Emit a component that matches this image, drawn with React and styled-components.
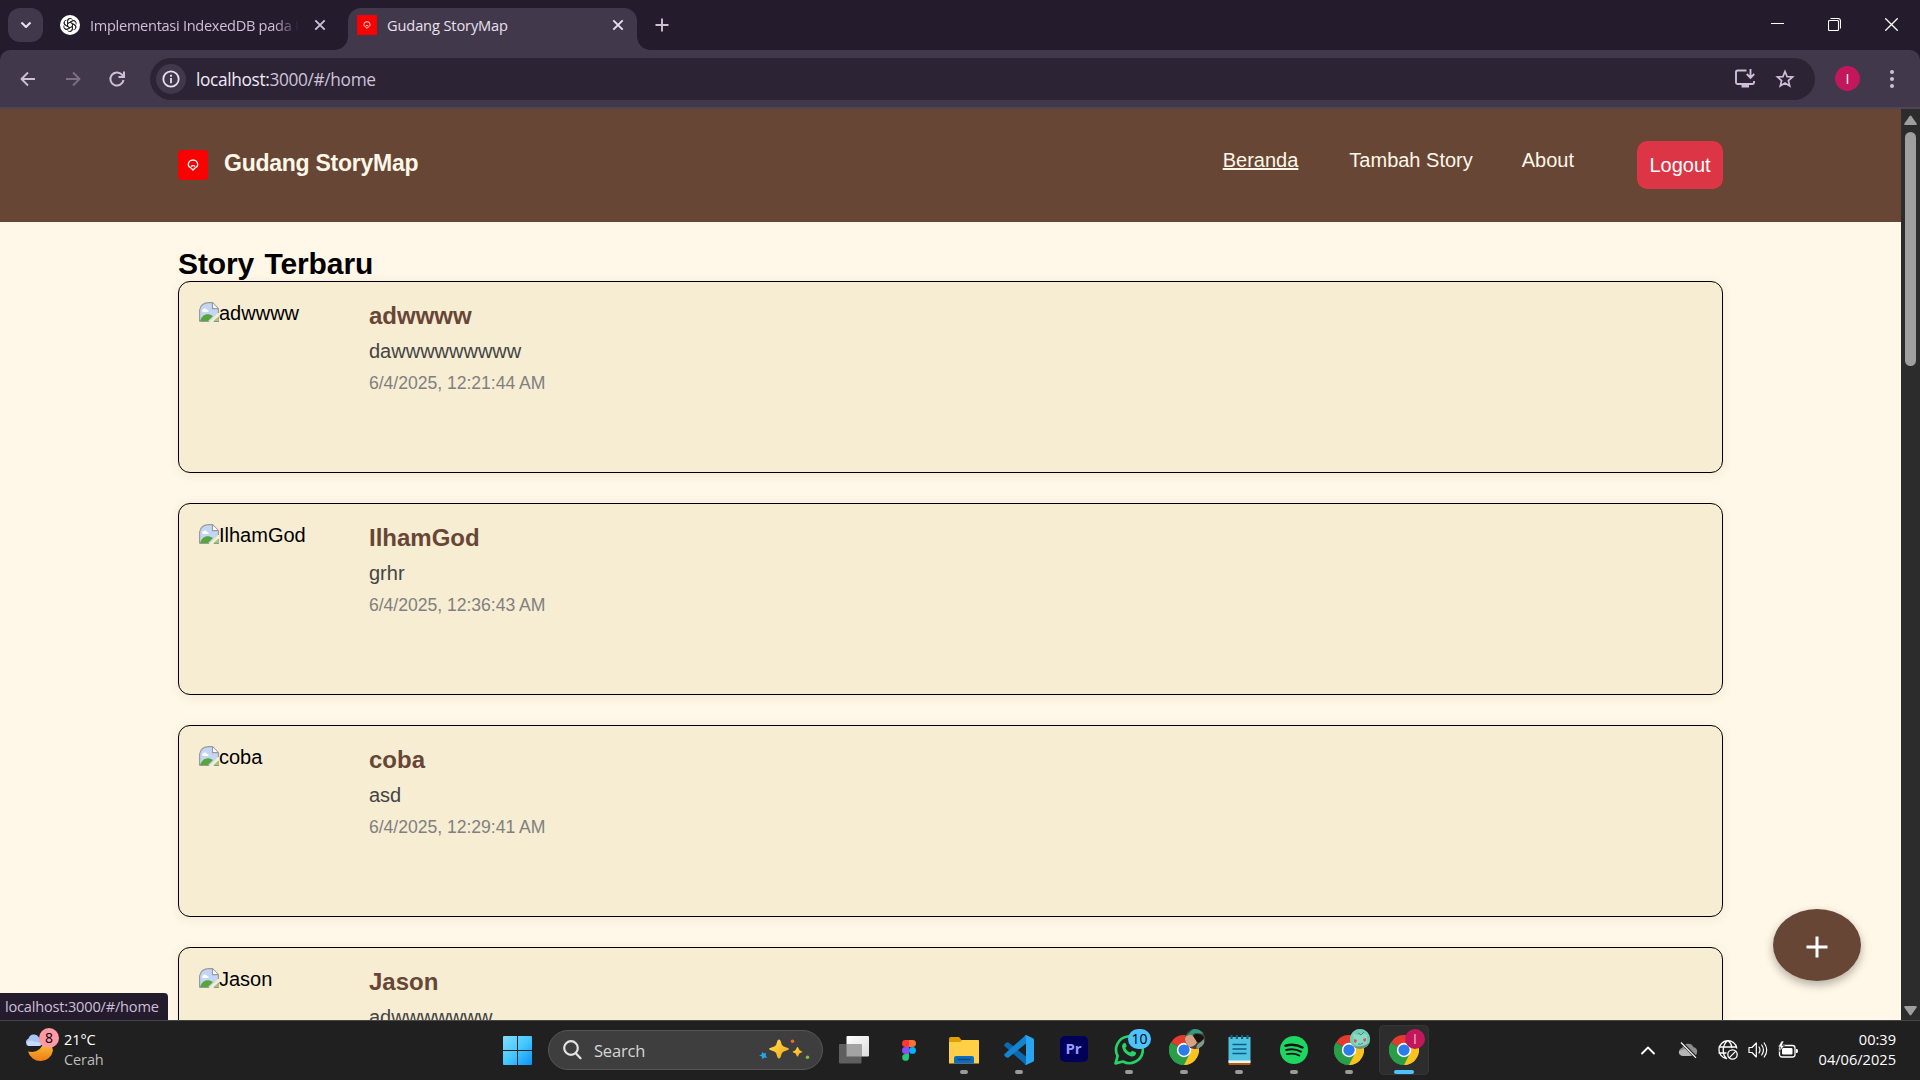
import React from "react";
import styled, { createGlobalStyle } from "styled-components";

const Global = createGlobalStyle`
  * { box-sizing: border-box; margin: 0; padding: 0; }
  html, body { background: #241b2d; overflow: hidden; }
  svg { display: block; flex: none; }
`;

const UI = `"Open Sans", "Noto Sans", sans-serif`;
const ARIAL = `"Liberation Sans", Arial, sans-serif`;

const Screen = styled.div`
  width: 1920px;
  height: 1080px;
  display: flex;
  flex-direction: column;
  overflow: hidden;
  font-family: ${UI};
`;

/* browser tab strip */
const TabStrip = styled.div`
  height: 50px;
  flex: none;
  display: flex;
  align-items: flex-end;
  background: #241b2d;
  padding-left: 8px;
`;
const TabSearch = styled.button`
  width: 35px;
  height: 34px;
  margin-bottom: 8px;
  border: 0;
  border-radius: 12px;
  background: #42384b;
  display: grid;
  place-items: center;
`;
const Tab = styled.div`
  position: relative;
  height: 42px;
  width: ${(p) => p.$w}px;
  margin-left: ${(p) => p.$ml}px;
  padding: 0 ${(p) => p.$pr}px 8px 9px;
  display: flex;
  align-items: center;
  gap: 10px;
  border-radius: 13px 13px 0 0;
  background: ${(p) => (p.$active ? "#42384b" : "transparent")};
  color: ${(p) => (p.$active ? "#e9e0ee" : "#cdbfd8")};
  &::before, &::after {
    content: "";
    display: ${(p) => (p.$active ? "block" : "none")};
    position: absolute;
    bottom: 0;
    width: 13px;
    height: 13px;
  }
  &::before { left: -13px; background: radial-gradient(circle at 0 0, transparent 12.5px, #42384b 13px); }
  &::after { right: -13px; background: radial-gradient(circle at 100% 0, transparent 12.5px, #42384b 13px); }
`;
const TabTitle = styled.span`
  flex: 1;
  min-width: 0;
  overflow: hidden;
  white-space: nowrap;
  font-size: 14.6px;
  line-height: 20px;
  letter-spacing: ${(p) => p.$ls}px;
  ${(p) => p.$fade && "margin-right: 5px; mask-image: linear-gradient(90deg, #000 88%, transparent 100%);"}
`;
const NewTab = styled.div`
  margin: 0 0 18px 18px;
`;
const WindowButtons = styled.div`
  margin-left: auto;
  height: 50px;
  display: flex;
  align-items: center;
  gap: 44px;
  padding: 0 22px 1px 0;
`;

/* toolbar */
const ToolbarBack = styled.div`
  height: 59px;
  flex: none;
  background: #241b2d;
`;
const Toolbar = styled.div`
  height: 59px;
  display: flex;
  align-items: center;
  background: #42384b;
  border-bottom: 2px solid #4e4657;
  border-radius: 10px 10px 0 0;
  padding: 0 20px 0 18px;
`;
const NavIcons = styled.div`
  display: flex;
  gap: 24.5px;
  width: 132px;
`;
const Omnibox = styled.div`
  width: 1665px;
  height: 42px;
  border-radius: 21px;
  background: #2c2335;
  display: flex;
  align-items: center;
  padding: 0 20px 0 6px;
`;
const SiteInfo = styled.div`
  width: 30px;
  height: 30px;
  border-radius: 50%;
  background: #42384b;
  display: grid;
  place-items: center;
`;
const Url = styled.div`
  margin-left: 10px;
  padding-top: 2px;
  flex: 1;
  font-size: 17.3px;
  line-height: 24px;
  letter-spacing: -0.35px;
  color: #cfc3d8;
  b { font-weight: 400; color: #f1e9f6; }
`;
const OmniIcons = styled.div`
  display: flex;
  align-items: center;
  gap: 20px;
`;
const Profile = styled.div`
  width: 25px;
  height: 25px;
  margin-left: 20px;
  border-radius: 50%;
  background: #c2185b;
  color: #fff;
  font-size: 14px;
  line-height: 25px;
  text-align: center;
`;
const MenuDots = styled.div`
  margin-left: auto;
  width: 16px;
  display: flex;
  flex-direction: column;
  align-items: center;
  gap: 3px;
  i { width: 4px; height: 4px; border-radius: 50%; background: #cdbfd8; }
`;

/* web page */
const Viewport = styled.div`
  height: 911px;
  flex: none;
  display: flex;
  position: relative;
  overflow: hidden;
  font-family: ${ARIAL};
`;
const Page = styled.main`
  width: 1901px;
  background: #fff7e7;
`;
const SiteHeader = styled.header`
  height: 113px;
  background: #674636;
  display: flex;
  align-items: center;
  padding: 0 178px 2px;
`;
const Brand = styled.div`
  display: flex;
  align-items: center;
  gap: 16px;
  color: #fff7e7;
  font-size: 23px;
  font-weight: 700;
  line-height: 30px;
  letter-spacing: -0.25px;
`;
const BrandText = styled.span`
  padding-bottom: 3px;
`;
const Logo = styled.div`
  width: 30px;
  height: 30px;
  border-radius: 4px;
  background: #fb0000;
  display: grid;
  place-items: center;
`;
const Nav = styled.nav`
  margin-left: auto;
  display: flex;
  align-items: flex-start;
  padding-top: 1px;
`;
const NavLink = styled.a`
  margin-top: 8px;
  margin-right: ${(p) => p.$mr}px;
  font-size: 20px;
  line-height: 23px;
  color: #fff7e7;
  text-decoration: ${(p) => (p.$active ? "underline" : "none")};
`;
const Logout = styled.button`
  width: 86px;
  height: 48px;
  border: 0;
  border-radius: 10px;
  background: #dc3545;
  color: #fff;
  font: 20px/23px ${ARIAL};
`;
const Content = styled.section`
  padding: 24px 178px 0;
`;
const Heading = styled.h1`
  font-size: 30px;
  line-height: 35px;
  letter-spacing: -0.1px;
  word-spacing: 2px;
  color: #000;
`;
const Stories = styled.div`
  display: flex;
  flex-direction: column;
  gap: 30px;
`;
const Card = styled.article`
  height: 192px;
  display: flex;
  gap: 20px;
  padding: 20px;
  border: 1px solid #000;
  border-radius: 12px;
  background: #f7edd3;
  box-shadow: 0 2px 12px rgba(103, 70, 54, 0.08);
`;
const Photo = styled.div`
  width: 150px;
  height: 150px;
  display: flex;
  align-items: flex-start;
  font-size: 20px;
  line-height: 23px;
  color: #000;
`;
const Details = styled.div`
  padding-top: 0;
`;
const Name = styled.h2`
  font-size: 24px;
  line-height: 27px;
  color: #674636;
`;
const Description = styled.p`
  margin-top: 11px;
  font-size: 20px;
  line-height: 23px;
  color: #444;
`;
const CreatedAt = styled.p`
  margin-top: 10px;
  font-size: 17.6px;
  line-height: 20px;
  letter-spacing: -0.03px;
  color: #808080;
`;
const Fab = styled.button`
  position: absolute;
  left: 1773px;
  top: 800px;
  width: 88px;
  height: 72px;
  border: 0;
  border-radius: 50%;
  background: #674636;
  display: grid;
  place-items: center;
  padding-top: 3px;
  box-shadow: 0 4px 10px rgba(0, 0, 0, 0.3);
`;
const Scrollbar = styled.div`
  width: 19px;
  background: #2c2c2c;
  display: flex;
  flex-direction: column;
  align-items: center;
  padding: 6px 0 4px;
`;
const Thumb = styled.div`
  width: 11px;
  height: 234px;
  margin: 7px 0 auto;
  border-radius: 6px;
  background: #9f9f9f;
`;
const StatusBubble = styled.div`
  position: absolute;
  left: 0;
  bottom: 0;
  width: 168px;
  height: 27px;
  padding-left: 5px;
  border-radius: 0 4px 0 0;
  background: #241b2d;
  color: #cdbfd8;
  font: 14.6px/27px ${UI};
  letter-spacing: -0.2px;
`;

/* taskbar */
const Taskbar = styled.footer`
  height: 60px;
  flex: none;
  display: flex;
  align-items: center;
  background: #202020;
  border-top: 1px solid #464646;
  padding-bottom: 1px;
  color: #fff;
`;
const Weather = styled.div`
  width: 492px;
  padding-left: 24px;
  display: flex;
  align-items: center;
  gap: 4px;
  font-size: 14.5px;
  line-height: 20px;
`;
const WeatherText = styled.div`
  padding-bottom: 1px;
  letter-spacing: -0.1px;
`;
const Muted = styled.div`
  color: #bdbdbd;
`;
const SearchBox = styled.div`
  width: 275px;
  height: 40px;
  margin: 0 6px;
  padding: 0 11px 0 14px;
  border: 1px solid #565656;
  border-radius: 20px;
  background: #3e3e3e;
  display: flex;
  align-items: center;
  color: #d6d6d6;
  font-size: 16.5px;
  span { flex: 1; margin-left: 12px; letter-spacing: -0.2px; }
`;
const Apps = styled.div`
  display: flex;
  gap: 5px;
`;
const App_ = styled.div`
  position: relative;
  width: 50px;
  height: 50px;
  display: grid;
  place-items: center;
  border-radius: 5px;
  background: ${(p) => (p.$active ? "#2d2d2d" : "transparent")};
  box-shadow: ${(p) => (p.$active ? "inset 0 0 0 1px #353535" : "none")};
  &::after {
    content: "";
    display: ${(p) => (p.$open || p.$active ? "block" : "none")};
    position: absolute;
    bottom: 1px;
    left: 50%;
    transform: translateX(-50%);
    width: ${(p) => (p.$active ? 20 : 8)}px;
    height: 4px;
    border-radius: 2px;
    background: ${(p) => (p.$active ? "#4cc2ff" : "#9a9a9a")};
  }
`;
const Badge = styled.div`
  position: absolute;
  left: ${(p) => p.$x}px;
  top: ${(p) => p.$y}px;
  width: ${(p) => p.$w || 20}px;
  height: 20px;
  border-radius: 10px;
  overflow: hidden;
  background: ${(p) => p.$bg};
  color: ${(p) => p.$fg || "#000"};
  font-size: 14px;
  line-height: 20px;
  text-align: center;
`;
const PrTile = styled.div`
  width: 28px;
  height: 26px;
  border-radius: 5px;
  background: #00005b;
  color: #9999ff;
  font: 700 15px/25px "Open Sans", sans-serif;
  text-align: center;
  margin: -2px 0 0 -1px;
`;
const Tray = styled.div`
  margin-left: auto;
  display: flex;
  align-items: center;
  padding-right: 24px;
`;
const TrayIcon = styled.div`
  margin-right: ${(p) => p.$mr}px;
`;
const Clock = styled.div`
  width: 78px;
  padding-bottom: 2px;
  text-align: right;
  font-size: 14.6px;
  line-height: 20px;
  white-space: nowrap;
`;

const line = { fill: "none", stroke: "currentColor", strokeLinecap: "round", strokeLinejoin: "round" };

const CloseX = ({ c }) => (
  <svg width="12" height="12" viewBox="0 0 12 12" {...line} stroke={c} strokeWidth="1.9" strokeLinecap="butt">
    <path d="M1.3 1.3l9.4 9.4M10.7 1.3l-9.4 9.4" />
  </svg>
);

const KnotIcon = () => (
  <svg width="20" height="20" viewBox="0 0 20 20">
    <circle cx="10" cy="10" r="10" fill="#fff" />
    <g fill="none" stroke="#222" strokeWidth="0.9">
      {[0, 60, 120, 180, 240, 300].map((a) => (
        <path key={a} transform={`rotate(${a} 10 10)`} d="M7.6 11.4V6.2a2.7 2.7 0 0 1 4.9-1.6M7.6 8.6l4.5-2.6a2.7 2.7 0 0 1 3.6 .9" />
      ))}
    </g>
  </svg>
);

const Pin = ({ size }) => (
  <svg width={size} height={size} viewBox="0 0 12 12" fill="none" stroke="#fff" strokeWidth="1.3">
    <path d="M6 11L4 9C2.200 8.200 1.300 7 1.300 5.500a4.700 4.500 0 0 1 9.400 0C10.700 7 9.800 8.200 8 9z" />
    <path d="M3.800 7.600Q6 5.800 8.200 7.600" />
  </svg>
);
const Favicon = styled(Logo)`
  width: 20px;
  height: 20px;
  border-radius: 0;
`;

const BrokenImage = () => (
  <svg width="20" height="20" viewBox="0 0 20 20">
    <path d="M1 20V7Q3 1 10 1h3l6 6v4L10 20z" fill="#c4d6f6" />
    <path d="M3 9c1-3 4-3 5-1 2 0 2 2 1 2H4z" fill="#fff" />
    <path d="M1 19c2-6 7-9 13-5l-5 5z" fill="#57a639" />
    <path d="M.6 19.500V8Q2 .7 10 .7h3.500l5.900 6V11M20 15v4.500h-5M.6 19.500H10" fill="none" stroke="#9a9a9a" strokeWidth="1.200" />
    <path d="M13.500 1v5.700H19" fill="#fff" stroke="#9a9a9a" strokeWidth="1.200" />
    <path d="M14 19.500l5.500-5v5z" fill="#57a639" opacity=".55" />
  </svg>
);

const Chrome = () => (
  <svg width="30" height="30" viewBox="0 0 48 48">
    <path d="M24 24L3.200 12A24 24 0 0 1 44.800 12z" fill="#e33b2e" />
    <path d="M24 24L44.800 12A24 24 0 0 1 24 48z" fill="#fcc31e" />
    <path d="M24 24L24 48A24 24 0 0 1 3.200 12z" fill="#2a9d49" />
    <path d="M24 13h20.800A24 24 0 0 1 24 48l9.500-18.500z" fill="#fcc31e" />
    <path d="M3.200 12L14.500 29.500 24 35l9.500-5.500L24 48A24 24 0 0 1 3.200 12z" fill="#2a9d49" />
    <circle cx="24" cy="24" r="11.500" fill="#fff" />
    <circle cx="24" cy="24" r="9" fill="#2b7bea" />
  </svg>
);

const PhotoBadge = () => (
  <svg width="20" height="20" viewBox="0 0 20 20">
    <rect width="20" height="20" fill="#4a4038" />
    <path d="M0 8L8 0h12v5L10 4 3 9z" fill="#2f9c86" />
    <path d="M0 8q6-4 10 0l2 5q-2 5-8 5L0 13z" fill="#d8a183" />
    <path d="M8 7q5-5 11 1l-2 6-5-1z" fill="#17130f" />
    <path d="M12 16l7-6v8l-8 2z" fill="#7d9a8b" />
  </svg>
);
const CreatureBadge = () => (
  <svg width="20" height="20" viewBox="0 0 20 20">
    <rect width="20" height="20" fill="#73cdb4" />
    <path d="M0 20v-4q9 4 20-2v6z" fill="#7b8b7d" />
    <path d="M3 4l4 2 5-2 5 2v8q-7 6-13 0z" fill="#8adbc5" />
    <path d="M4 10l3 1-1 3-2-1zM13 10l3-1v3l-2 1z" fill="#d9526a" />
    <path d="M8 4l3 2 3-3M8 15q3 1 5-1" stroke="#3c8c7a" fill="none" />
  </svg>
);

const Windows = () => (
  <svg width="29" height="29" viewBox="0 0 29 29">
    <defs>
      <linearGradient id="win" gradientUnits="userSpaceOnUse" x1="0" y1="0" x2="29" y2="29">
        <stop offset="0" stopColor="#85dcff" />
        <stop offset=".5" stopColor="#44c8fd" />
        <stop offset="1" stopColor="#0a93fb" />
      </linearGradient>
    </defs>
    <path fill="url(#win)" d="M1 0h13v14H0V1a1 1 0 0 1 1-1zM15 0h13a1 1 0 0 1 1 1v13H15zM0 15h14v14H1a1 1 0 0 1-1-1zM15 15h14v13a1 1 0 0 1-1 1H15z" />
  </svg>
);

const Sparkles = () => (
  <svg width="52" height="22" viewBox="0 0 52 22">
    <defs>
      <linearGradient id="gold" x1="0" y1="0" x2="1" y2="1">
        <stop offset="0" stopColor="#ffe14d" />
        <stop offset="1" stopColor="#f5a713" />
      </linearGradient>
    </defs>
    <path fill="url(#gold)" d="M20 .5q1.300 0 1.900 2.300l1 3.300 1.800 1.500 3.500 1.200q1.800.6 1.800 1.200t-1.800 1.200l-3.500 1.200-1.800 1.500-1 3.300Q21.300 19.500 20 19.500t-1.900-2.300l-1-3.300-1.800-1.500-3.500-1.200Q10 10.600 10 10t1.800-1.200l3.500-1.200 1.800-1.500 1-3.300Q18.700.5 20 .5z" />
    <path fill="url(#gold)" d="M38.500 8q.8 0 1.100 1.500l.8 1.600 1.500.8q1.500.3 1.500.9t-1.500.9l-1.500.8-.8 1.600q-.3 1.500-1.100 1.500t-1.100-1.500l-.8-1.600-1.500-.8q-1.500-.3-1.500-.9t1.500-.9l1.500-.8.8-1.600Q37.700 8 38.500 8z" />
    <path fill="#20a8f0" d="M3 13l2 1.500 2-.5-.2 2.500L8 19l-2.500-.5L3 20v-2.500L0 16.500l2.700-1z" />
    <circle cx="33.500" cy="2.300" r="1.800" fill="#ee6a2b" />
    <circle cx="48.500" cy="18.300" r="1.800" fill="#7cc142" />
  </svg>
);

const TaskView = () => (
  <svg width="30" height="28" viewBox="0 0 30 28">
    <defs>
      <linearGradient id="tv" x1="0" y1="0" x2="1" y2="1">
        <stop offset="0" stopColor="#fff" />
        <stop offset="1" stopColor="#dcdcdc" />
      </linearGradient>
    </defs>
    <rect x="7.500" width="22.500" height="20.500" rx="1" fill="url(#tv)" />
    <rect y="8" width="22.500" height="19.500" rx="1" fill="#5f5f5f" />
    <path d="M7.500 8h15v12.500h-15z" fill="#a3a3a3" />
  </svg>
);

const Figma = () => (
  <svg width="14" height="21" viewBox="0 0 14 21">
    <path d="M7 0H3.500a3.400 3.400 0 0 0 0 6.900H7z" fill="#ff3737" />
    <path d="M7 0h3.500a3.400 3.400 0 0 1 0 6.900H7z" fill="#ff7237" />
    <path d="M7 7H3.500a3.400 3.400 0 0 0 0 6.900H7z" fill="#874fff" />
    <circle cx="10.500" cy="10.400" r="3.400" fill="#00b6ff" />
    <path d="M7 14H3.500A3.400 3.400 0 1 0 7 17.400z" fill="#24cb71" />
  </svg>
);

const Folder = () => (
  <svg width="30" height="27" viewBox="0 0 30 27">
    <path d="M0 2q0-2 1.500-2H10l2.500 3H28q2 0 2 2v3H0z" fill="#dfa000" />
    <path d="M0 5h11l2.500-2H29q1 0 1 1v22.500H0z" fill="#ffcf48" />
    <path d="M5 26.500V21q0-2 2-2h16q2 0 2 2v5.500z" fill="#0f6cbd" />
    <path d="M8.500 22.500h13" stroke="#0a4a85" strokeWidth="1.500" />
  </svg>
);

const VSCode = () => (
  <svg width="30" height="30" viewBox="0 0 30 30">
    <path d="M1 8.800l2-1.500q.6-.3 1.200 0L22 21.500V30L.5 11q-.8-1 .5-2.200z" fill="#0a6ab6" />
    <path d="M1 21.200l2 1.500q.6.300 1.200 0L22 8.500V0L.5 19q-.8 1 .5 2.200z" fill="#1584d0" />
    <path d="M22 0l7 3.200q1 .5 1 1.600v20.400q0 1.100-1 1.600L22 30q-1 0-1.800-.8 1.800 1 1.800-1.700v-25Q22-.2 20.200.8 21 0 22 0z" fill="#27a5f2" />
  </svg>
);

const WhatsApp = () => (
  <svg width="30" height="30" viewBox="0 0 30 30">
    <path d="M1.600 28.400l2-7.400A13.400 13.400 0 1 1 9 26.500z" fill="none" stroke="#25d366" strokeWidth="2.700" strokeLinejoin="round" />
    <path d="M10.200 8q-2.800 1.500-2 4.500 1.600 6.500 9 9 3 .6 4.800-2.500.5-1.300-.7-1.900l-2.600-1.200q-.8-.3-1.400.5l-1 1.200q-3.500-1-5-4.600l1-1.300q.5-.6.200-1.400l-1-2.100q-.5-.6-1.300-.2z" fill="#25d366" />
  </svg>
);

const Notepad = () => (
  <svg width="23" height="30" viewBox="0 0 23 30">
    <rect x=".5" y="2" width="22" height="25" fill="#50c3e0" />
    <path d="M.5 25.500h22v2.500H.5z" fill="#f3f3f3" />
    <path d="M.5 28h22v1.200q0 .8-1 .8h-20q-1 0-1-.8z" fill="#b8590c" />
    <path d="M4.500 9.500h14M4.500 14h14M4.500 18.500h14" stroke="#0d5b87" strokeWidth="1.500" />
    <path d="M3.500 0v4M8.800 0v4M14.100 0v4M19.400 0v4" stroke="#16607d" strokeWidth="2.200" />
  </svg>
);

const Spotify = () => (
  <svg width="28" height="28" viewBox="0 0 28 28">
    <circle cx="14" cy="14" r="14" fill="#1ed760" />
    <g {...line} stroke="#151515">
      <path d="M5.500 9.700q9-2.600 17 1.800" strokeWidth="2.500" />
      <path d="M6.200 14q8-2.200 14.700 1.600" strokeWidth="2.100" />
      <path d="M7 18.200q7-1.700 12.300 1.300" strokeWidth="1.800" />
    </g>
  </svg>
);

const MoonCloud = () => (
  <svg width="36" height="40" viewBox="0 0 36 40">
    <defs>
      <linearGradient id="moon" x1="0" y1="0" x2="0" y2="1">
        <stop offset="0" stopColor="#f9c23c" />
        <stop offset="1" stopColor="#f07d14" />
      </linearGradient>
    </defs>
    <path d="M4 21.500q12.500 2.500 15.500-9.500 9 1 9.500 8.500a12.800 12.800 0 0 1-25 1z" fill="url(#moon)" />
    <path d="M4.500 16a4 4 0 0 1 0-7.500Q6 4 10.500 4.500q4 .5 5 4.500 3 .5 3 3.500T15 16z" fill="#a9c5f4" />
    <path d="M3 12q4-3 8 0 4-1 6 3l-2 1H5q-2 0-2-4z" fill="#c9dbfa" />
  </svg>
);
const WeatherIcon = styled.div`
  position: relative;
  width: 36px;
  height: 40px;
`;

const stories = [
  { name: "adwwww", text: "dawwwwwwwww", date: "6/4/2025, 12:21:44 AM" },
  { name: "IlhamGod", text: "grhr", date: "6/4/2025, 12:36:43 AM" },
  { name: "coba", text: "asd", date: "6/4/2025, 12:29:41 AM" },
  { name: "Jason", text: "adwwwwwww", date: "" },
];

export default function App() {
  return (
    <Screen>
      <Global />
      <TabStrip>
        <TabSearch>
          <svg width="12" height="8" viewBox="0 0 12 8" {...line} stroke="#e9e0ee" strokeWidth="2.100" strokeLinecap="butt"><path d="M1.500 1.500L6 6l4.500-4.500" /></svg>
        </TabSearch>
        <Tab $w={283} $ml={8} $pr={8}>
          <KnotIcon />
          <TabTitle $ls={-0.3} $fade>Implementasi IndexedDB pada PWA</TabTitle>
          <CloseX c="#cdbfd8" />
        </Tab>
        <Tab $active $w={289} $ml={14} $pr={13}>
          <Favicon><Pin size={8} /></Favicon>
          <TabTitle $ls={-0.12}>Gudang StoryMap</TabTitle>
          <CloseX c="#e9e0ee" />
        </Tab>
        <NewTab>
          <svg width="14" height="14" viewBox="0 0 14 14" {...line} stroke="#cdbfd8" strokeWidth="1.900" strokeLinecap="butt"><path d="M7 .5v13M.5 7h13" /></svg>
        </NewTab>
        <WindowButtons>
          <svg width="13" height="13" viewBox="0 0 13 13"><path d="M0 5.500h13" stroke="#fff" /></svg>
          <svg width="13" height="13" viewBox="0 0 13 13" fill="none" stroke="#fff" strokeWidth="1.100"><rect x=".5" y="2.500" width="10" height="10" rx="1" /><path d="M2.500.5H10A2.500 2.500 0 0 1 12.500 3v7.500" /></svg>
          <svg width="13" height="13" viewBox="0 0 13 13" stroke="#fff" strokeWidth="1.300"><path d="M.3.300l12.400 12.400M12.700.3L.3 12.700" /></svg>
        </WindowButtons>
      </TabStrip>

      <ToolbarBack>
        <Toolbar>
          <NavIcons>
            <svg width="20" height="20" viewBox="0 0 20 20" {...line} stroke="#cdbfd8" strokeWidth="1.900" strokeLinecap="butt"><path d="M17 10H4M10 3.500L3.500 10l6.500 6.500" /></svg>
            <svg width="20" height="20" viewBox="0 0 20 20" {...line} stroke="#7b6f86" strokeWidth="1.900" strokeLinecap="butt"><path d="M3 10h13M10 3.500l6.500 6.500-6.500 6.500" /></svg>
            <svg width="20" height="20" viewBox="0 0 20 20" {...line} stroke="#cdbfd8" strokeWidth="2" strokeLinecap="butt"><path d="M16.500 11A6.600 6.600 0 1 1 15 5.700L17 8M17 2.500V8h-5.500" strokeLinejoin="miter" /></svg>
          </NavIcons>
          <Omnibox>
            <SiteInfo>
              <svg width="18" height="18" viewBox="0 0 18 18" fill="none" stroke="#e9e0ee" strokeWidth="1.800"><circle cx="9" cy="9" r="7.700" /><path d="M9 8v5.200M9 4.800v1.900" /></svg>
            </SiteInfo>
            <Url><b>localhost:</b>3000/#/home</Url>
            <OmniIcons>
              <svg width="20" height="19" viewBox="0 0 20 19" fill="none" stroke="#cdbfd8" strokeWidth="1.900"><path d="M11.500 1.500H3Q1 1.500 1 3v10.500Q1 15 2.500 15h15q1.500 0 1.500-1.500V12M15.500 0v8.500M11.800 5l3.700 3.800L19.200 5" /><path d="M6.500 17h7.500" strokeWidth="3" /></svg>
              <svg width="20" height="20" viewBox="0 0 20 20" fill="none" stroke="#cdbfd8" strokeWidth="1.700"><path d="M10 2.500l2.100 5.100 5.500.4-4.200 3.600 1.300 5.400-4.700-2.900L5.300 17l1.300-5.400L2.400 8l5.500-.4z" /></svg>
            </OmniIcons>
          </Omnibox>
          <Profile>I</Profile>
          <MenuDots><i /><i /><i /></MenuDots>
        </Toolbar>
      </ToolbarBack>

      <Viewport>
        <Page>
          <SiteHeader>
            <Brand>
              <Logo><Pin size={12} /></Logo>
              <BrandText>Gudang StoryMap</BrandText>
            </Brand>
            <Nav>
              <NavLink $active $mr={51}>Beranda</NavLink>
              <NavLink $mr={49}>Tambah Story</NavLink>
              <NavLink $mr={63}>About</NavLink>
              <Logout>Logout</Logout>
            </Nav>
          </SiteHeader>
          <Content>
            <Heading>Story Terbaru</Heading>
            <Stories>
              {stories.map((s) => (
                <Card key={s.name}>
                  <Photo><BrokenImage />{s.name}</Photo>
                  <Details>
                    <Name>{s.name}</Name>
                    <Description>{s.text}</Description>
                    <CreatedAt>{s.date}</CreatedAt>
                  </Details>
                </Card>
              ))}
            </Stories>
          </Content>
        </Page>
        <Scrollbar>
          <svg width="13" height="10" viewBox="0 0 13 10"><path d="M6.500.500Q7 .5 7.500 1.200L12.600 8.500q.5 1.500-1 1.500H1.400Q-.1 10 .4 8.500L5.500 1.200Q6 .5 6.500.5z" fill="#9f9f9f" /></svg>
          <Thumb />
          <svg width="13" height="10" viewBox="0 0 13 10"><path d="M6.500 9.500Q7 9.500 7.500 8.800L12.600 1.500q.5-1.500-1-1.500H1.400Q-.1 0 .4 1.500L5.500 8.800Q6 9.500 6.500 9.500z" fill="#9f9f9f" /></svg>
        </Scrollbar>
        <Fab>
          <svg width="22" height="22" viewBox="0 0 22 22"><path d="M11 .5v21M.5 11h21" stroke="#fff" strokeWidth="3" /></svg>
        </Fab>
        <StatusBubble>localhost:3000/#/home</StatusBubble>
      </Viewport>

      <Taskbar>
        <Weather>
          <WeatherIcon>
            <MoonCloud />
            <Badge $x={15} $y={-2} $bg="#ff99a4">8</Badge>
          </WeatherIcon>
          <WeatherText>
            <div>21°C</div>
            <Muted>Cerah</Muted>
          </WeatherText>
        </Weather>
        <App_><Windows /></App_>
        <SearchBox>
          <svg width="19" height="20" viewBox="0 0 19 20" {...line} stroke="#e3e3e3" strokeWidth="2.200"><circle cx="8" cy="8" r="6.800" /><path d="M12.800 13.300l4.700 5" /></svg>
          <span>Search</span>
          <Sparkles />
        </SearchBox>
        <Apps>
          <App_><TaskView /></App_>
          <App_><Figma /></App_>
          <App_ $open><Folder /></App_>
          <App_ $open><VSCode /></App_>
          <App_><PrTile>Pr</PrTile></App_>
          <App_ $open><WhatsApp /><Badge $x={24} $y={4} $w={23} $bg="#4cc2ff">10</Badge></App_>
          <App_ $open><Chrome /><Badge $x={26} $y={4} $bg="#555"><PhotoBadge /></Badge></App_>
          <App_ $open><Notepad /></App_>
          <App_ $open><Spotify /></App_>
          <App_ $open><Chrome /><Badge $x={26} $y={4} $bg="#73cdb4"><CreatureBadge /></Badge></App_>
          <App_ $active><Chrome /><Badge $x={26} $y={4} $bg="#c2185b" $fg="#f3b5cc">I</Badge></App_>
        </Apps>
        <Tray>
          <TrayIcon $mr={23}>
            <svg width="14" height="9" viewBox="0 0 14 9" {...line} stroke="#fff" strokeWidth="1.800"><path d="M1 7.500l6-6 6 6" /></svg>
          </TrayIcon>
          <TrayIcon $mr={20}>
            <svg width="20" height="16" viewBox="0 0 20 16"><path d="M4.500 14a4.300 4.300 0 0 1-.3-8.300 6.300 6.300 0 0 1 11.500-.5A4.500 4.500 0 0 1 15.500 14z" fill="#8d8d8d" /><path d="M5 14q-5-1-4-5l6-2 8 3-3 4z" fill="#b5b5b5" /><path d="M3.500.5L18 15.500" stroke="#202020" strokeWidth="3" /><path d="M3 .5L18 15.800" stroke="#fff" strokeWidth="1.200" /></svg>
          </TrayIcon>
          <TrayIcon $mr={10}>
            <svg width="20" height="20" viewBox="0 0 20 20" {...line} stroke="#fff" strokeWidth="1.300"><path d="M18.800 8A9 9 0 1 0 8.500 18.600M1 7h17.500M1 13h7M9.700.8C4 5 4 14 8.300 18.500M10.300.8Q13.500 3.500 13.800 7.500" /><circle cx="14.500" cy="14.500" r="4.700" /><path d="M11.400 17.600l6.200-6.200" /></svg>
          </TrayIcon>
          <TrayIcon $mr={10}>
            <svg width="20" height="18" viewBox="0 0 20 18" {...line} stroke="#fff" strokeWidth="1.200"><path d="M1 6.500h3L8.300 2v14L4 11.500H1z" /><path d="M11 6q2 3 0 6M13.700 4q3.500 5 0 10M16.200 2q5 7 0 14" /></svg>
          </TrayIcon>
          <TrayIcon $mr={20}>
            <svg width="20" height="18" viewBox="0 0 20 18"><rect x="1.500" y="4.500" width="15.500" height="11.500" rx="2.500" fill="none" stroke="#fff" strokeWidth="1.300" /><rect x="4" y="7" width="10.500" height="6.500" rx="1" fill="#fff" /><path d="M18 8h1q1 0 1 2t-1 2h-1z" fill="#fff" /><path d="M3.500 0L0 6h2.500L1.500 10.500 6.500 4.500H4L6 0z" fill="#fff" stroke="#202020" strokeWidth=".6" /></svg>
          </TrayIcon>
          <Clock>
            <div>00:39</div>
            <div>04/06/2025</div>
          </Clock>
        </Tray>
      </Taskbar>
    </Screen>
  );
}
